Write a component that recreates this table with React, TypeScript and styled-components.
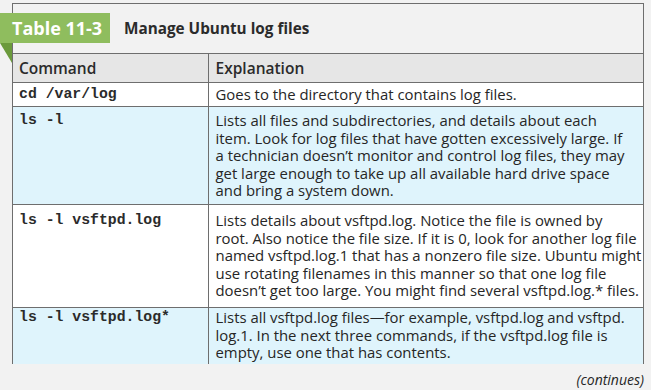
import React from "react";
import styled, { createGlobalStyle } from "styled-components";

interface IRow {
  command: string;
  lines: string[];
  shaded?: boolean;
  padTop: number;
  padBottom: number;
}

const rows: IRow[] = [
  {
    command: "cd /var/log",
    lines: ["Goes to the directory that contains log files."],
    padTop: 3,
    padBottom: 3,
  },
  {
    command: "ls -l",
    lines: [
      "Lists all files and subdirectories, and details about each",
      "item. Look for log files that have gotten excessively large. If",
      "a technician doesn\u2019t monitor and control log files, they may",
      "get large enough to take up all available hard drive space",
      "and bring a system down.",
    ],
    shaded: true,
    padTop: 5,
    padBottom: 5,
  },
  {
    command: "ls -l vsftpd.log",
    lines: [
      "Lists details about vsftpd.log. Notice the file is owned by",
      "root. Also notice the file size. If it is 0, look for another log file",
      "named vsftpd.log.1 that has a nonzero file size. Ubuntu might",
      "use rotating filenames in this manner so that one log file",
      "doesn\u2019t get too large. You might find several vsftpd.log.* files.",
    ],
    padTop: 7,
    padBottom: 8,
  },
  {
    command: "ls -l vsftpd.log*",
    lines: [
      "Lists all vsftpd.log files\u2014for example, vsftpd.log and vsftpd.",
      "log.1. In the next three commands, if the vsftpd.log file is",
      "empty, use one that has contents.",
    ],
    shaded: true,
    padTop: 1,
    padBottom: 4,
  },
];

const App = () => {
  return (
    <>
      <GlobalStyle />
      <Page>
        <Frame>
          <TitleBar>
            <Badge>Table 11-3</Badge>
            <Title>Manage Ubuntu log files</Title>
          </TitleBar>
          <TableClip>
            <Table>
              <colgroup>
                <col style={{ width: 195 }} />
                <col />
              </colgroup>
              <thead>
                <tr>
                  <HeadCell>Command</HeadCell>
                  <HeadCell>Explanation</HeadCell>
                </tr>
              </thead>
              <tbody>
                {rows.map((r) => (
                  <Row key={r.command} $shaded={r.shaded}>
                    <CommandCell $padTop={r.padTop} $padBottom={r.padBottom}>
                      {r.command}
                    </CommandCell>
                    <TextCell $padTop={r.padTop} $padBottom={r.padBottom}>
                      {r.lines.map((l) => (
                        <Line key={l}>{l}</Line>
                      ))}
                    </TextCell>
                  </Row>
                ))}
              </tbody>
            </Table>
          </TableClip>
        </Frame>
        <Continues>(continues)</Continues>
      </Page>
    </>
  );
};

const GlobalStyle = createGlobalStyle`
  html, body {
    margin: 0;
    background: #f2f2f2;
  }
  body {
    font-family: "Open Sans", "DejaVu Sans", sans-serif;
    color: #262626;
  }
`;

const Page = styled.div`
  width: 651px;
  height: 390px;
  padding: 3px 0 0 12px;
  box-sizing: border-box;
  overflow: hidden;
`;

const Frame = styled.div`
  width: 632px;
  border: 1px solid #6e6e6e;
  border-bottom: none;
  box-sizing: border-box;
`;

const TitleBar = styled.div`
  height: 49px;
  display: flex;
  align-items: center;
  gap: 14px;
`;

const Badge = styled.div`
  position: relative;
  margin-left: -13px;
  margin-top: -2px;
  width: 110px;
  height: 30px;
  box-sizing: border-box;
  padding-left: 12px;
  background: #8fbd5e;
  color: #fff;
  font-size: 18px;
  font-weight: 700;
  line-height: 30px;
  white-space: nowrap;

  &::after {
    content: "";
    position: absolute;
    left: 0;
    top: 30px;
    border-style: solid;
    border-width: 0 12px 20px 0;
    border-color: transparent #6b9a3c transparent transparent;
  }
`;

const Title = styled.h2`
  margin: -2px 0 0;
  font-size: 15.3px;
  font-weight: 700;
  color: #2b2b2b;
`;

const TableClip = styled.div`
  height: 311px;
  overflow: hidden;
`;

const Table = styled.table`
  width: 100%;
  border-collapse: collapse;
  table-layout: fixed;
`;

const HeadCell = styled.th`
  background: #e6e6e6;
  border-top: 1px solid #6e6e6e;
  border-bottom: 1px solid #6e6e6e;
  height: 28px;
  padding: 0 6px;
  text-align: left;
  font-size: 15.5px;
  font-weight: 600;
  color: #2b2b2b;

  & + & {
    border-left: 1px solid #6e6e6e;
    padding-left: 7px;
  }
`;

const Row = styled.tr<{ $shaded?: boolean }>`
  background: ${(p) => (p.$shaded ? "#dff4fc" : "#ffffff")};
  border-bottom: 1px solid #6e6e6e;
`;

const CommandCell = styled.td<{ $padTop: number; $padBottom: number }>`
  vertical-align: top;
  padding: ${(p) => p.$padTop}px 6px ${(p) => p.$padBottom}px;
  font-family: "Liberation Mono", "Courier New", monospace;
  font-weight: 700;
  font-size: 14.8px;
  line-height: 17.4px;
  color: #2b2b2b;
  white-space: pre;
`;

const TextCell = styled.td<{ $padTop: number; $padBottom: number }>`
  vertical-align: top;
  border-left: 1px solid #6e6e6e;
  padding: ${(p) => p.$padTop}px 1px ${(p) => p.$padBottom}px 7px;
  font-size: 14.9px;
  line-height: 17.4px;
  color: #262626;
`;

const Line = styled.div`
  white-space: nowrap;
`;

const Continues = styled.div`
  width: 632px;
  text-align: right;
  font-style: italic;
  font-size: 14px;
  margin-top: 6px;
  color: #262626;
`;

export default App;
